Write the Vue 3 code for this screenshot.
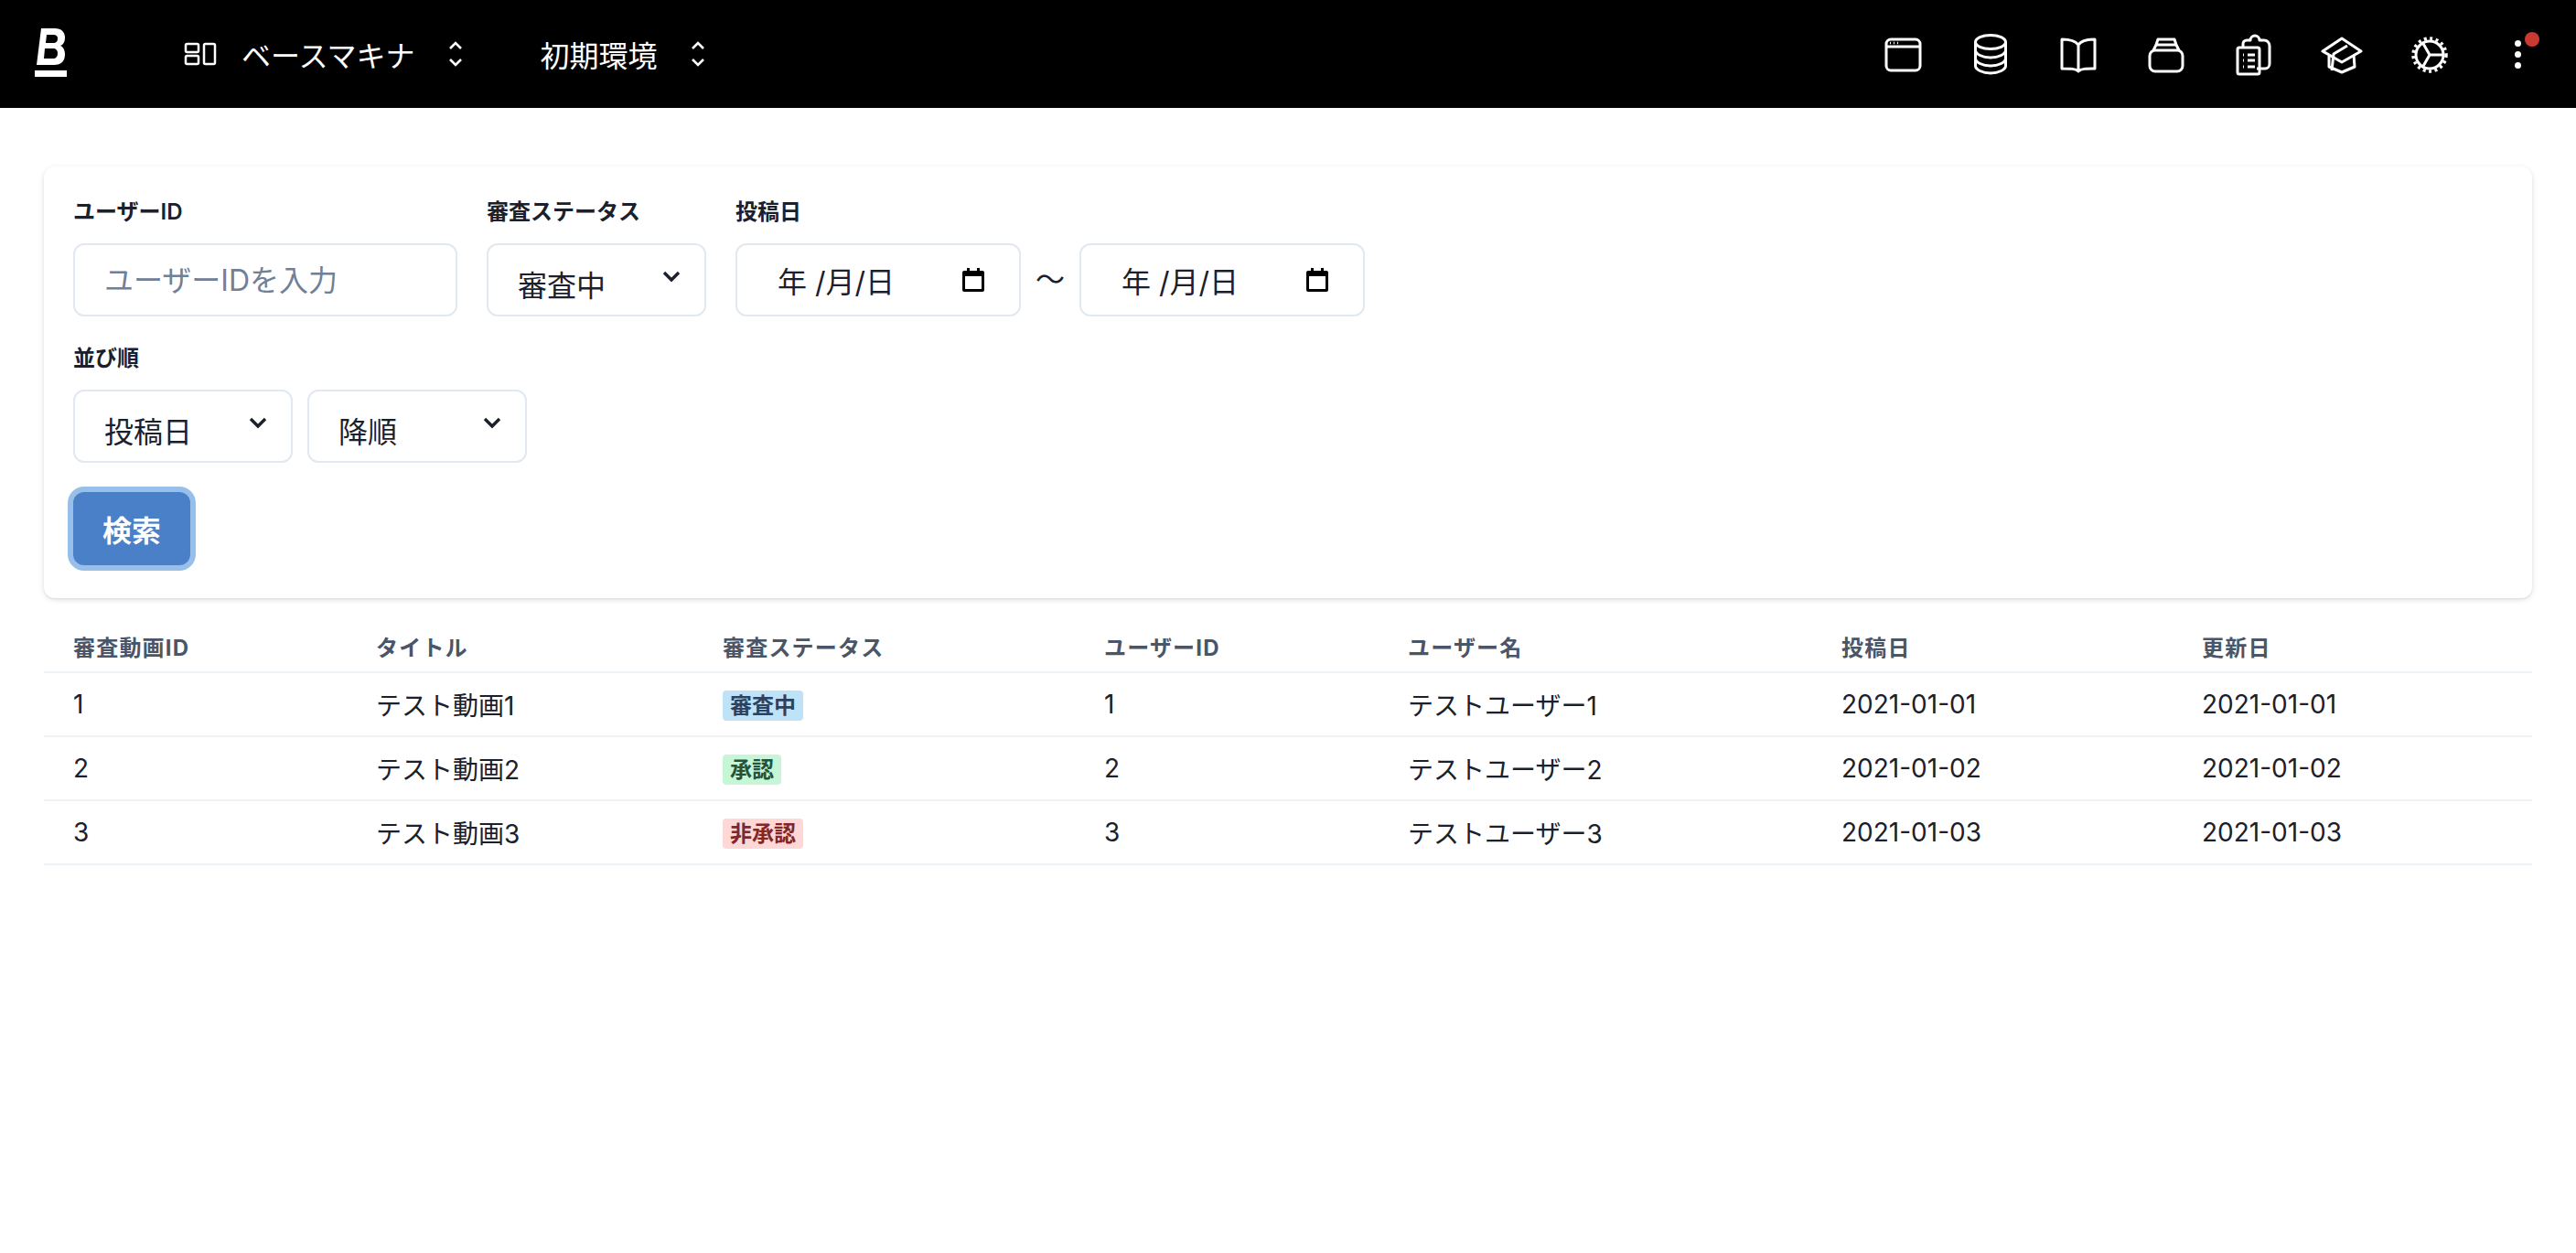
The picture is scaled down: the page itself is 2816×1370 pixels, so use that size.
<script setup>
const rows = [
  { id: 1, title: 'テスト動画1', status: '審査中', kind: 'blue', user: 'テストユーザー1', posted: '2021-01-01', updated: '2021-01-01' },
  { id: 2, title: 'テスト動画2', status: '承認', kind: 'green', user: 'テストユーザー2', posted: '2021-01-02', updated: '2021-01-02' },
  { id: 3, title: 'テスト動画3', status: '非承認', kind: 'red', user: 'テストユーザー3', posted: '2021-01-03', updated: '2021-01-03' },
]
const heads = ['審査動画ID', 'タイトル', '審査ステータス', 'ユーザーID', 'ユーザー名', '投稿日', '更新日']
</script>

<template>
  <div class="page">
    <header class="topbar">
      <svg class="logo" width="36" height="56" viewBox="0 0 36 56">
        <path fill="#fff" fill-rule="evenodd" d="M7 1h15c7 0 11 4 11 10 0 5-2 8-5 9 3 1 5 5 5 9 0 8-4 12-12 12H2zM13 8l-1 9h8c3 0 5-1 5-5 0-3-2-4-5-4zM11 23l-1 11h10c3 0 5-2 5-6 0-3-2-5-5-5z"/>
        <rect x="0" y="47" width="35" height="7" fill="#fff"/>
      </svg>
      <div class="switch first">
        <svg class="grid" width="36" height="26" viewBox="0 0 36 26" fill="none" stroke="#fff" stroke-width="2.5">
          <rect x="2" y="2" width="14" height="9" rx="1.5"/>
          <rect x="2" y="15" width="14" height="9" rx="1.5"/>
          <rect x="22" y="2" width="12" height="22" rx="1.5"/>
        </svg>
        <span>ベースマキナ</span>
        <svg class="updown" width="18" height="28" viewBox="0 0 18 28" fill="none" stroke="#fff" stroke-width="2.6">
          <path d="M3 8l6-6 6 6M3 20l6 6 6-6"/>
        </svg>
      </div>
      <div class="switch second">
        <span>初期環境</span>
        <svg class="updown" width="18" height="28" viewBox="0 0 18 28" fill="none" stroke="#fff" stroke-width="2.6">
          <path d="M3 8l6-6 6 6M3 20l6 6 6-6"/>
        </svg>
      </div>
      <nav class="tools">
        <svg width="48" height="48" viewBox="0 0 48 48" fill="none" stroke="#fff" stroke-width="3" stroke-linejoin="round">
          <rect x="6" y="8" width="37" height="34" rx="5"/><path d="M6 16h37"/>
          <path d="M10 12h1M14 12h1M18 12h1" stroke-width="2.5"/>
        </svg>
        <svg width="48" height="48" viewBox="0 0 48 48" fill="none" stroke="#fff" stroke-width="3">
          <ellipse cx="24" cy="11" rx="16.500" ry="7.500"/>
          <path d="M7.500 11v26c0 4 7.500 8 16.500 8s16.500-4 16.500-8V11M7.500 20c0 4 7.500 8 16.500 8s16.500-4 16.500-8M7.500 29c0 4 7.500 8 16.500 8s16.500-4 16.500-8"/>
        </svg>
        <svg width="48" height="48" viewBox="0 0 48 48" fill="none" stroke="#fff" stroke-width="3" stroke-linejoin="round">
          <path d="M24 14c-3-4-8-6-18-6v32c10 0 15 0 18 3 3-3 8-3 18-3V8c-10 0-15 2-18 6zM24 14v29"/>
        </svg>
        <svg width="48" height="48" viewBox="0 0 48 48" fill="none" stroke="#fff" stroke-width="3" stroke-linejoin="round">
          <rect x="6" y="20" width="36" height="23" rx="6"/>
          <path d="M10 20l3-6h22l3 6M13 14l2-6h18l2 6"/>
        </svg>
        <svg width="48" height="48" viewBox="0 0 48 48" fill="none" stroke="#fff" stroke-width="3" stroke-linejoin="round">
          <path d="M12 16v-3a4 4 0 0 1 4-4h4a5 5 0 0 1 10 0h5a6 6 0 0 1 6 6v20a5 5 0 0 1-5 5h-9"/>
          <rect x="6" y="17" width="24" height="29" rx="2"/>
          <path d="M12 25h1M12 31h1M12 38h1M17 25h8M17 31h8M17 38h8"/>
        </svg>
        <svg width="48" height="48" viewBox="0 0 48 48" fill="none" stroke="#fff" stroke-width="3" stroke-linejoin="round">
          <path d="M24 7l21 14-21 12L3 21z"/>
          <path d="M10 26v12l14 6 14-6-1-13M30 15l-15 9-2 18"/>
        </svg>
        <svg width="48" height="48" viewBox="0 0 48 48" fill="none" stroke="#fff" stroke-width="3" stroke-linejoin="round">
          <circle cx="24" cy="25" r="15"/>
          <circle cx="24" cy="25" r="18" stroke-dasharray="3 3.500" stroke-width="3.500"/>
          <path d="M24 25h16M24 25l-8-14M24 25l-8 14"/>
        </svg>
        <span class="more">
          <i></i><i></i><i></i>
          <b class="alert"></b>
        </span>
      </nav>
    </header>

    <section class="card">
      <div class="fields">
        <div class="field">
          <label class="label">ユーザーID</label>
          <input class="control text" placeholder="ユーザーIDを入力" />
        </div>
        <div class="field">
          <label class="label">審査ステータス</label>
          <div class="control select status"><span>審査中</span><svg width="24" height="24" viewBox="0 0 24 24" fill="none" stroke="#1a202c" stroke-width="3.400"><path d="M4 8l8 8 8-8"/></svg></div>
        </div>
        <div class="field">
          <label class="label">投稿日</label>
          <div class="dates">
            <div class="control date"><span>年 /月/日</span><svg width="28" height="28" viewBox="0 0 28 28"><path d="M4 4h3V1h3v3h8V1h3v3h3a2 2 0 0 1 2 2v19a2 2 0 0 1-2 2H4a2 2 0 0 1-2-2V6a2 2 0 0 1 2-2zM5 10v14h18V10z"/></svg></div>
            <span class="tilde">〜</span>
            <div class="control date"><span>年 /月/日</span><svg width="28" height="28" viewBox="0 0 28 28"><path d="M4 4h3V1h3v3h8V1h3v3h3a2 2 0 0 1 2 2v19a2 2 0 0 1-2 2H4a2 2 0 0 1-2-2V6a2 2 0 0 1 2-2zM5 10v14h18V10z"/></svg></div>
          </div>
        </div>
      </div>
      <div class="field sort">
        <label class="label">並び順</label>
        <div class="dates">
          <div class="control select order"><span>投稿日</span><svg width="24" height="24" viewBox="0 0 24 24" fill="none" stroke="#1a202c" stroke-width="3.400"><path d="M4 8l8 8 8-8"/></svg></div>
          <div class="control select order"><span>降順</span><svg width="24" height="24" viewBox="0 0 24 24" fill="none" stroke="#1a202c" stroke-width="3.400"><path d="M4 8l8 8 8-8"/></svg></div>
        </div>
      </div>
      <button class="search">検索</button>
    </section>

    <table class="table">
      <thead>
        <tr><th v-for="h in heads" :key="h">{{ h }}</th></tr>
      </thead>
      <tbody>
        <tr v-for="r in rows" :key="r.id">
          <td>{{ r.id }}</td>
          <td>{{ r.title }}</td>
          <td><span class="badge" :class="r.kind">{{ r.status }}</span></td>
          <td>{{ r.id }}</td>
          <td>{{ r.user }}</td>
          <td>{{ r.posted }}</td>
          <td>{{ r.updated }}</td>
        </tr>
      </tbody>
    </table>
  </div>
</template>

<style>
html, body { margin: 0; background: #fff; }
</style>

<style scoped>
.page {
  min-height: 1370px;
  background: #fff;
  color: #1a202c;
  font-family: Inter, "Noto Sans CJK JP", sans-serif;
}
.topbar {
  height: 118px;
  background: #000;
  display: flex;
  align-items: center;
  color: #fff;
  font-size: 32px;
  padding: 0 40px 0 38px;
  box-sizing: border-box;
}
.logo { flex: none; margin-top: -2px; }
.switch { display: flex; align-items: center; }
.switch.first { margin-left: 127px; }
.switch.first span { margin-left: 27px; }
.switch.second { margin-left: 83px; }
.updown { margin-left: 36px; }
.tools { margin-left: auto; display: flex; align-items: center; gap: 48px; }
.more { position: relative; width: 48px; height: 48px; display: flex; flex-direction: column; align-items: center; justify-content: center; gap: 5px; }
.more i { display: block; width: 7px; height: 7px; border-radius: 50%; background: #fff; }
.alert { position: absolute; width: 16px; height: 16px; border-radius: 50%; background: #cb3a32; right: 0; top: 0; }

.card {
  margin: 64px 48px 0;
  padding: 32px;
  border-radius: 12px;
  background: #fff;
  box-shadow: 0 2px 6px rgba(0, 0, 0, .12), 0 1px 2px rgba(0, 0, 0, .06);
  height: 472px;
  box-sizing: border-box;
}
.fields { display: flex; gap: 32px; }
.field { display: flex; flex-direction: column; }
.label { font-size: 24px; font-weight: 600; line-height: 36px; margin-bottom: 16px; height: 36px; }
.sort { margin-top: 28px; }
.control {
  box-sizing: border-box;
  height: 80px;
  border: 2px solid #e2e8f0;
  border-radius: 12px;
  background: #fff;
  font: inherit;
  font-size: 32px;
  color: #1a202c;
}
.text { width: 420px; padding: 0 32px; outline: none; }
.text::placeholder { color: #718096; opacity: 1; }
.select { display: flex; align-items: center; justify-content: space-between; padding: 0 24px 0 32px; }
.select span { padding-top: 8px; }
.select svg { flex: none; margin-top: -8px; }
.status { width: 240px; }
.order { width: 240px; }
.dates { display: flex; align-items: center; gap: 16px; }
.date { width: 312px; display: flex; align-items: center; justify-content: space-between; padding: 0 36px 0 44px; color: #1a202c; }
.date svg { flex: none; }
.tilde { font-size: 32px; line-height: 1; width: 32px; text-align: center; }
.search {
  display: block;
  margin-top: 32px;
  width: 128px;
  height: 80px;
  border: none;
  border-radius: 12px;
  background: #4a80c8;
  color: #fff;
  font: inherit;
  font-size: 32px;
  font-weight: 600;
  box-shadow: 0 0 0 6px #98bfe9;
}

.table {
  width: 2720px;
  margin: 24px 48px 0;
  border-collapse: collapse;
  table-layout: fixed;
}
th, td { text-align: left; padding: 0 0 0 32px; border-bottom: 2px solid #edf2f7; }
th {
  height: 56px;
  font-size: 24px;
  font-weight: 700;
  color: #4a5568;
  letter-spacing: .05em;
}
td { height: 68px; font-size: 28px; }
th:nth-child(1) { width: 299px; }
th:nth-child(2) { width: 347px; }
th:nth-child(3) { width: 385px; }
th:nth-child(4) { width: 300px; }
th:nth-child(5) { width: 442px; }
th:nth-child(6) { width: 362px; }
.badge { display: inline-block; font-size: 24px; font-weight: 600; line-height: 33px; padding: 0 8px; border-radius: 4px; vertical-align: middle; }
.blue { background: #bee3f8; color: #2a4365; }
.green { background: #c6f6d5; color: #22543d; }
.red { background: #fed7d7; color: #822727; }
</style>
